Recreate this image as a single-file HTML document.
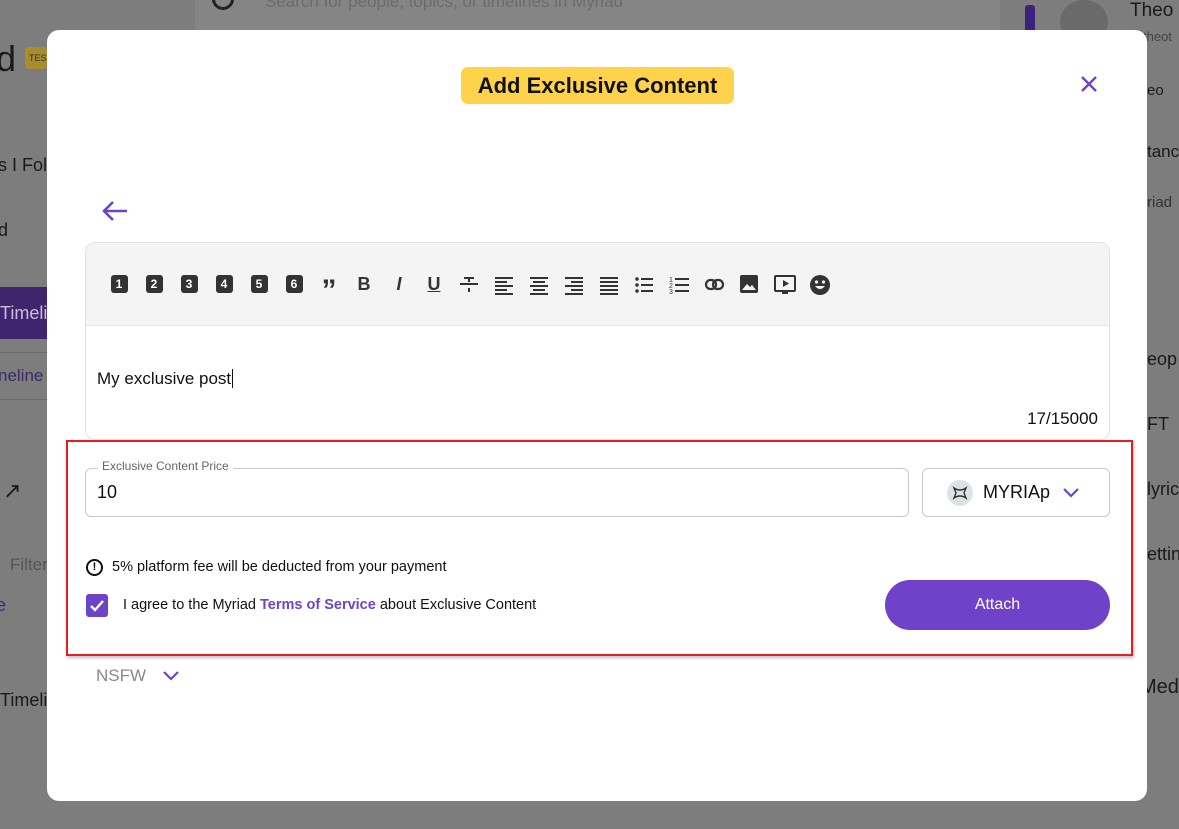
<!DOCTYPE html>
<html><head><meta charset="utf-8"><style>
*{box-sizing:border-box;margin:0;padding:0}
body{width:1179px;height:829px;overflow:hidden;background:#7d7d7d;font-family:"Liberation Sans",sans-serif;position:relative}
.bg{position:absolute;color:#1a1a1a;font-size:18px;white-space:nowrap}
.modal{position:absolute;left:47px;top:30px;width:1100px;height:771px;background:#fff;border-radius:12px}
.abs{position:absolute}
.tb{position:absolute;top:274px;width:20px;height:20px;display:flex;align-items:center;justify-content:center}
.num{width:17px;height:18px;background:#333;border-radius:3px;color:#fff;font-size:12px;font-weight:bold;display:flex;align-items:center;justify-content:center}
</style></head><body>
<!-- background -->
<div class="abs" style="left:195px;top:-20px;width:805px;height:105px;background:#858585;border-radius:14px"></div>
<div class="bg" style="left:265px;top:-8px;color:#6c6c6c;font-size:17px">Search for people, topics, or timelines in Myriad</div>
<div class="abs" style="left:212px;top:-12px;width:22px;height:22px;border:3px solid #222;border-radius:50%"></div>
<div class="bg" style="left:-4px;top:38px;font-size:36px">d</div>
<div class="abs" style="left:25px;top:47px;width:22px;height:22px;background:#a88d2c;border-radius:4px;font-size:9px;color:#333;padding:6px 0 0 4px">TES</div>
<div class="bg" style="left:-2px;top:155px">s I Fol</div>
<div class="bg" style="left:-2px;top:220px">d</div>
<div class="abs" style="left:0;top:287px;width:47px;height:52px;background:#3f246e"></div>
<div class="bg" style="left:0;top:303px;color:#c8c0d8">Timeli</div>
<div class="abs" style="left:0;top:352px;width:47px;height:48px;border-top:1px solid #6a6a6a;border-bottom:1px solid #6a6a6a"></div>
<div class="bg" style="left:-2px;top:366px;color:#3b2a66;font-size:17px">neline</div>
<div class="bg" style="left:3px;top:478px;font-size:22px">↗</div>
<div class="bg" style="left:10px;top:555px;color:#555;font-size:17px">Filter</div>
<div class="bg" style="left:-4px;top:595px;color:#3b2a66">e</div>
<div class="bg" style="left:0;top:690px">Timeli</div>
<div class="abs" style="left:1025px;top:5px;width:10px;height:40px;background:#3b2080;border-radius:3px"></div>
<div class="abs" style="left:1060px;top:0;width:48px;height:44px;background:#6a6a6a;border-radius:50%"></div>
<div class="bg" style="left:1130px;top:0;font-size:19px">Theo</div>
<div class="bg" style="left:1143px;top:29px;font-size:13px;color:#444">theot</div>
<div class="bg" style="left:1147px;top:82px;font-size:15px">eo</div>
<div class="bg" style="left:1147px;top:142px;font-size:17px">tanc</div>
<div class="bg" style="left:1147px;top:194px;font-size:15px;color:#333">riad</div>
<div class="bg" style="left:1147px;top:349px">eop</div>
<div class="bg" style="left:1147px;top:414px">FT</div>
<div class="bg" style="left:1147px;top:479px">lyric</div>
<div class="bg" style="left:1147px;top:544px">ettin</div>
<div class="bg" style="left:1140px;top:676px;font-size:20px">Med</div>

<div class="modal"></div>
<div class="abs" style="left:461px;top:67px;width:273px;height:37px;background:#ffd24c;border-radius:7px;font-size:22px;font-weight:bold;color:#111;text-align:center;line-height:37px">Add Exclusive Content</div>
<svg class="abs" style="left:1080px;top:75px" width="18" height="18" viewBox="0 0 18 18"><path d="M2 2L16 16M16 2L2 16" stroke="#6d44c8" stroke-width="2.4"/></svg>
<svg class="abs" style="left:101px;top:199px" width="28" height="24" viewBox="0 0 28 24"><path d="M26 12H3M12 3L3 12L12 21" stroke="#6d44c8" stroke-width="2.6" fill="none"/></svg>

<div class="abs" style="left:85px;top:242px;width:1025px;height:198px;border:1px solid #e2e2e2;border-radius:10px;overflow:hidden">
<div style="height:83px;background:#f4f4f4;border-bottom:1px solid #e6e6e6"></div>
</div>
<div class="tb" style="left:109px"><div class="num">1</div></div>
<div class="tb" style="left:144px"><div class="num">2</div></div>
<div class="tb" style="left:179px"><div class="num">3</div></div>
<div class="tb" style="left:214px"><div class="num">4</div></div>
<div class="tb" style="left:249px"><div class="num">5</div></div>
<div class="tb" style="left:284px"><div class="num">6</div></div>
<div class="tb" style="left:319px;font-size:30px;font-weight:bold;color:#333;padding-top:14px">”</div>
<div class="tb" style="left:354px;font-size:18px;font-weight:bold;color:#333">B</div>
<div class="tb" style="left:389px;font-size:18px;font-weight:bold;font-style:italic;color:#333">I</div>
<div class="tb" style="left:424px;font-size:18px;color:#333;text-decoration:underline;font-weight:bold">U</div>
<svg class="abs" style="left:459px;top:274px" width="200" height="22" viewBox="0 0 200 22" fill="#333">
<rect x="1" y="9" width="18" height="2"/><rect x="5" y="3" width="10" height="2"/><rect x="9" y="3" width="2" height="5"/><rect x="9" y="14" width="2" height="4"/>
<g transform="translate(35,0)"><rect x="1" y="3" width="18" height="2"/><rect x="1" y="7" width="12" height="2"/><rect x="1" y="11" width="18" height="2"/><rect x="1" y="15" width="12" height="2"/><rect x="1" y="19" width="18" height="2"/></g>
<g transform="translate(70,0)"><rect x="1" y="3" width="18" height="2"/><rect x="4" y="7" width="12" height="2"/><rect x="1" y="11" width="18" height="2"/><rect x="4" y="15" width="12" height="2"/><rect x="1" y="19" width="18" height="2"/></g>
<g transform="translate(105,0)"><rect x="1" y="3" width="18" height="2"/><rect x="7" y="7" width="12" height="2"/><rect x="1" y="11" width="18" height="2"/><rect x="7" y="15" width="12" height="2"/><rect x="1" y="19" width="18" height="2"/></g>
<g transform="translate(140,0)"><rect x="1" y="3" width="18" height="2"/><rect x="1" y="7" width="18" height="2"/><rect x="1" y="11" width="18" height="2"/><rect x="1" y="15" width="18" height="2"/><rect x="1" y="19" width="18" height="2"/></g>
<g transform="translate(175,0)"><circle cx="3" cy="5" r="1.8"/><circle cx="3" cy="11" r="1.8"/><circle cx="3" cy="17" r="1.8"/><rect x="7" y="4" width="12" height="2"/><rect x="7" y="10" width="12" height="2"/><rect x="7" y="16" width="12" height="2"/></g>
</svg>
<svg class="abs" style="left:669px;top:274px" width="170" height="22" viewBox="0 0 170 22" fill="#333">
<text x="0" y="8" font-size="7" font-family="Liberation Sans">1</text><text x="0" y="14" font-size="7" font-family="Liberation Sans">2</text><text x="0" y="20" font-size="7" font-family="Liberation Sans">3</text>
<rect x="6" y="4" width="14" height="2"/><rect x="6" y="10" width="14" height="2"/><rect x="6" y="16" width="14" height="2"/>
<g transform="translate(35,0)"><rect x="2" y="6" width="10" height="9" rx="4.5" fill="none" stroke="#333" stroke-width="2.2"/><rect x="9" y="6" width="10" height="9" rx="4.5" fill="none" stroke="#333" stroke-width="2.2"/></g>
<g transform="translate(70,0)"><rect x="1" y="1" width="18" height="18" rx="2"/><path d="M3 16L8 10L11 13L13 11L17 16Z" fill="#f4f4f4"/></g>
<g transform="translate(105,0)"><rect x="1" y="2" width="20" height="15" rx="1" fill="none" stroke="#333" stroke-width="2"/><path d="M9 6L15 9.5L9 13Z"/><rect x="8" y="18" width="6" height="2"/></g>
<g transform="translate(140,0)"><circle cx="11" cy="11" r="10"/><circle cx="7.5" cy="8" r="1.6" fill="#f4f4f4"/><circle cx="14.5" cy="8" r="1.6" fill="#f4f4f4"/><path d="M6 12Q11 18 16 12Z" fill="#f4f4f4"/></g>
</svg>
<div class="abs" style="left:97px;top:369px;font-size:17px;color:#111">My exclusive post<span style="border-left:1px solid #111;margin-left:1px"></span></div>
<div class="abs" style="left:1000px;top:409px;width:98px;text-align:right;font-size:17px;color:#111">17/15000</div>

<div class="abs" style="left:66px;top:440px;width:1067px;height:216px;border:2px solid #e02020;box-shadow:1px 2px 3px rgba(0,0,0,.25)"></div>
<div class="abs" style="left:85px;top:468px;width:824px;height:49px;border:1px solid #c8c8c8;border-radius:6px"></div>
<div class="abs" style="left:98px;top:459px;padding:0 4px;background:#fff;font-size:12px;color:#666">Exclusive Content Price</div>
<div class="abs" style="left:97px;top:482px;font-size:18px;color:#111">10</div>
<div class="abs" style="left:922px;top:468px;width:188px;height:49px;border:1px solid #c8c8c8;border-radius:6px"></div>
<div class="abs" style="left:947px;top:480px;width:26px;height:26px;background:#dde3e4;border-radius:50%"></div>
<svg class="abs" style="left:952px;top:486px" width="16" height="14" viewBox="0 0 16 14"><path d="M2 2Q8 6 14 2L12 7L14 12Q8 8 2 12L4 7Z" fill="none" stroke="#333" stroke-width="1.4"/></svg>
<div class="abs" style="left:983px;top:482px;font-size:18px;color:#111">MYRIAp</div>
<svg class="abs" style="left:1062px;top:487px" width="18" height="12" viewBox="0 0 18 12"><path d="M2 2L9 9L16 2" stroke="#6d44c8" stroke-width="2.2" fill="none"/></svg>
<div class="abs" style="left:86px;top:559px;width:17px;height:17px;border:2px solid #111;border-radius:50%;font-size:11px;font-weight:bold;text-align:center;line-height:13px">!</div>
<div class="abs" style="left:112px;top:559px;font-size:14.5px;color:#111">5% platform fee will be deducted from your payment</div>
<div class="abs" style="left:86px;top:594px;width:22px;height:23px;background:#6d44c8;border-radius:3px"></div>
<svg class="abs" style="left:88px;top:597px" width="18" height="17" viewBox="0 0 18 17"><path d="M3 9L7 13L15 4" stroke="#fff" stroke-width="2.4" fill="none"/></svg>
<div class="abs" style="left:123px;top:597px;font-size:14.5px;color:#111">I agree to the Myriad <span style="color:#6d44c8;font-weight:bold">Terms of Service</span> about Exclusive Content</div>
<div class="abs" style="left:885px;top:580px;width:225px;height:50px;background:#7041c9;border-radius:25px;color:#fff;font-size:16px;text-align:center;line-height:50px">Attach</div>
<div class="abs" style="left:96px;top:666px;font-size:17px;color:#888">NSFW</div>
<svg class="abs" style="left:162px;top:670px" width="18" height="12" viewBox="0 0 18 12"><path d="M2 2L9 9L16 2" stroke="#6d44c8" stroke-width="2.2" fill="none"/></svg>
</body></html>
